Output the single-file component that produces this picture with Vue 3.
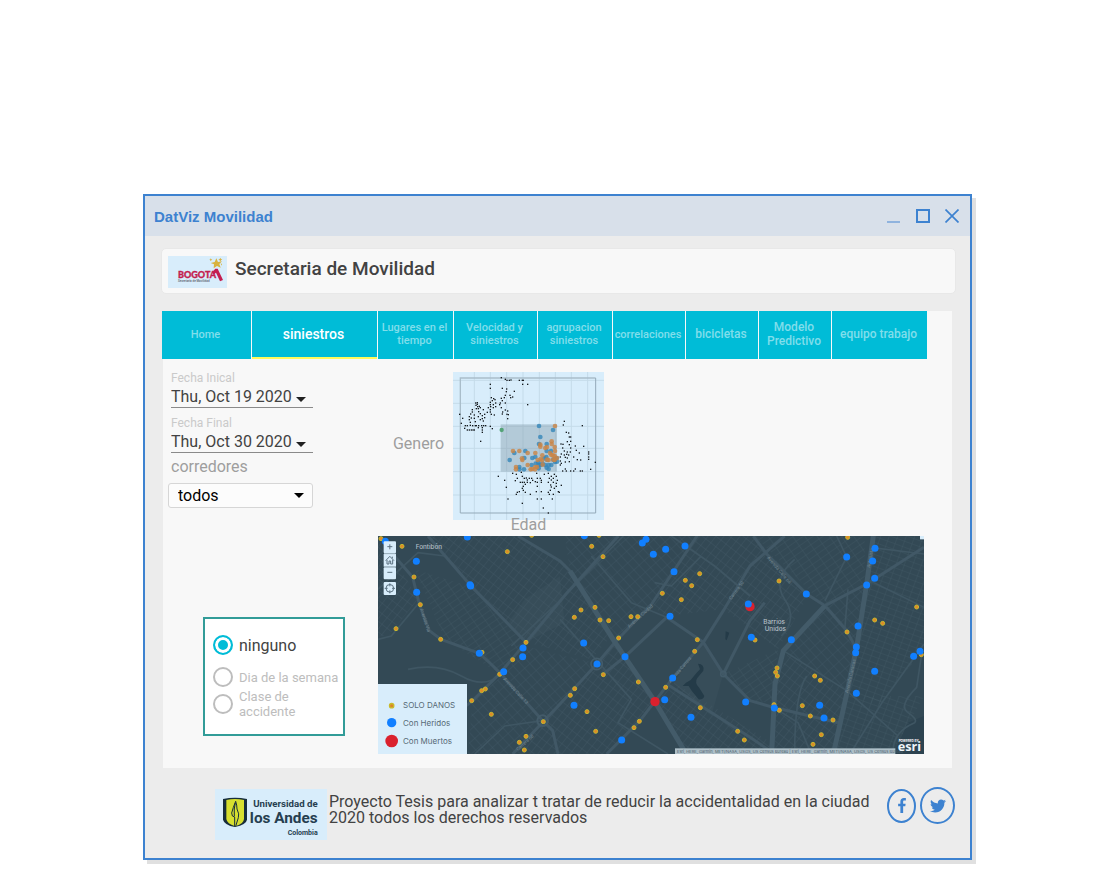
<script setup>
import { ref } from 'vue'

const tabs = [
  { label: 'Home', size: 'small' },
  { label: 'siniestros', size: 'large' },
  { label: 'Lugares en el tiempo', size: 'small' },
  { label: 'Velocidad y siniestros', size: 'small' },
  { label: 'agrupacion siniestros', size: 'small' },
  { label: 'correlaciones', size: 'small' },
  { label: 'bicicletas', size: 'medium' },
  { label: 'Modelo Predictivo', size: 'medium' },
  { label: 'equipo trabajo', size: 'medium' }
]
const activeTab = ref('siniestros')

const startDate = ref('Thu, Oct 19 2020')
const endDate = ref('Thu, Oct 30 2020')
const corridor = ref('todos')
const grouping = ref('ninguno')

const plain = [
  [184,38],[196,43],[201,46],[208,46],[213,45],[238,46],[247,46],[250,46],[248,58],[263,58],[151,58],[151,70],[187,70],[200,72],[199,80],[223,79],[196,91],[210,91],[212,98],[218,96],[154,98],[161,101],[165,104],[157,107],[184,100],[187,107],[193,98],
  [107,114],[112,113],[112,118],[108,121],[118,124],[113,125],[151,112],[151,119],[152,125],[160,119],[167,114],[181,114],[196,114],[179,119],[263,119],[97,134],[109,131],[115,131],[121,128],[130,134],[145,128],[151,134],[160,128],[167,125],[184,128],[196,135],[203,138],[188,141],
  [92,147],[97,141],[103,150],[116,140],[121,146],[127,152],[134,148],[142,142],[151,141],[154,148],[163,150],[187,147],[201,148],[205,149],[203,161],[59,148],[68,160],[64,175],[88,155],[88,164],[94,159],[103,160],[115,155],[121,164],[127,161],[134,158],[130,168],[106,170],[91,172],
  [76,182],[82,182],[91,181],[98,182],[106,182],[109,182],[116,182],[125,182],[131,182],[137,182],[151,184],[74,190],[82,195],[88,195],[94,195],[99,195],[103,195],[115,188],[127,188],[127,195],[127,202],[122,229],[157,191],
  [373,169],[370,180],[427,182],[379,202],[386,204],[388,216],[392,216],[382,230],[392,229],[363,237],[369,238],[388,239],[368,249],[392,249],[406,243],[431,244],[373,258],[382,261],[391,261],[409,256],[364,267],[373,270],[380,268],[386,270],[418,264],[446,261],[361,276],[376,277],[382,279],[401,276],[422,285],[446,267],[446,276],[446,283],[361,288],[376,291],[388,290],[412,284],[466,292],[361,300],[364,295],[376,312],[379,318],[392,318],[401,318],[421,318],[427,318],[452,313],[406,312],[368,318],
  [175,334],[194,346],[218,325],[229,328],[232,340],[226,347],[244,322],[247,334],[253,340],[259,339],[262,345],[268,340],[275,340],[278,346],[290,325],[292,340],[301,340],[304,346],[313,328],[325,325],[328,340],[334,345],[343,328],[349,334],[352,346],[340,340],[199,367],[247,352],[253,352],[256,358],[262,352],[271,353],[286,350],[292,352],[304,352],[325,352],[332,360],[340,352],[349,355],[364,361],[250,364],[292,364],[334,366],[343,370],[232,382],[238,380],[250,376],[256,382],[271,388],[289,380],[304,380],[325,382],[331,376],[340,388],[355,380],[358,382],[204,402],[247,415],[292,402],[304,402],[337,402],[310,429],[325,444],[241,352],[334,334],[349,364],[247,370],[229,388],[328,388]
]

const blue = [[297,183],[339,195],[301,216],[297,237],[320,237],[223,264],[256,258],[209,285],[253,279],[277,279],[286,276],[320,258],[333,258],[319,276],[313,280],[295,292],[287,296],[296,300],[302,300],[308,296],[316,300],[326,300],[334,300],[345,291],[351,290],[350,279],[238,306],[252,313],[275,300],[320,308],[326,312],[296,310],[238,313],[340,284],[322,285]]
const orange = [[345,183],[335,229],[335,237],[301,239],[301,245],[316,249],[321,246],[344,246],[219,258],[238,258],[263,264],[286,264],[330,264],[345,258],[307,271],[246,280],[247,285],[293,285],[302,282],[306,286],[321,284],[326,285],[339,271],[344,273],[351,279],[344,285],[263,300],[228,306],[228,313],[272,313],[286,306],[291,306],[285,313],[277,312],[308,299],[340,284],[334,270]]

// Map data: each sector lists its points from its own left edge.
const sectors = [
  {
    x: -6,
    light: [[15,14],[78,37],[467,4],[394,53],[114,129],[133,212],[60,284],[194,316],[318,355],[450,325],[410,377],[371,421],[317,470],[328,465],[287,500],[346,541],[502,563],[450,607],[430,625],[445,648]],
    injured: [[28,22],[274,9],[121,82],[282,152],[284,156],[122,175],[310,358],[441,342],[440,368],[383,413]],
    deaths: []
  },
  {
    x: 546,
    light: [[117,4],[95,37],[129,68],[376,139],[419,119],[395,155],[307,178],[364,197],[105,220],[63,228],[43,250],[120,258],[146,260],[213,248],[233,248],[176,312],[412,317],[404,352],[130,422],[235,444],[317,460],[44,464],[31,484],[81,533],[107,592],[238,562],[222,581],[421,521],[533,592],[553,618]],
    injured: [[73,5],[258,16],[247,27],[317,46],[375,36],[280,61],[342,113],[330,247],[71,327],[195,368],[111,390],[338,432],[314,497],[42,514],[185,618],[393,550],[557,504]],
    deaths: [[285,503]]
  },
  {
    x: 1086,
    light: [[323,10],[117,141],[530,219],[404,258],[428,268],[321,294],[45,318],[544,362],[111,402],[107,415],[112,426],[224,426],[241,439],[102,512],[118,529],[187,515],[211,546],[279,558],[244,602],[219,631]],
    injured: [[405,43],[320,69],[398,81],[404,133],[380,153],[199,180],[25,210],[354,276],[34,310],[154,317],[349,339],[347,356],[540,352],[521,367],[404,412],[349,478],[239,514],[252,552],[103,522]],
    deaths: [[30,218]]
  }
]

const avenues = [
  'M44 54L104 124L124 204L154 284L189 310L304 352L339 384L374 419L494 554L524 584L540 654',
  'M721 0L564 174L444 319L364 414L284 494L200 560',
  'M150 0L277 148L444 319',
  'M420 0L546 75L576 105L640 205L711 319L831 497L925 654',
  'M961 -6L821 204L711 319L656 384L546 504L404 654',
  'M1220 0L1116 90L1036 224L976 319L886 424L786 554L686 654',
  'M866 244L976 319L1036 414L1116 494L1186 514L1380 560',
  'M866 244L741 362L676 414',
  'M866 444L1116 604L1190 654',
  'M1036 414L1116 254L1160 200',
  'M1126 0L1166 54L1286 174L1341 209L1406 284L1436 340',
  'M1638 34L1466 144L1341 209L1216 344L1191 444L1181 654'
]
const majorAvenues = [
  'M1486 0L1466 144L1436 334L1406 474L1366 654',
  'M1341 209L1216 344L1191 444L1181 654',
  'M576 105L711 319L831 497L925 654'
]
const minorRoads = [
  'M736 0L546 194L400 330',
  'M1376 0L1406 63L1341 194',
  'M1216 344L1406 464L1560 600',
  'M1638 324L1516 494L1416 654',
  'M1476 34L1638 54',
  'M1476 134L1638 214',
  'M1400 284L1410 160',
  'M546 250L760 490L720 560L870 654',
  'M640 60L760 200L866 244',
  'M120 204L40 300L0 310',
  'M90 400Q180 380 250 420T370 414',
  'M880 0L1010 90L1116 180',
  'M970 60L880 150L830 140',
  'M290 654L380 570L494 554',
  'M1250 70Q1180 130 1220 190T1210 300',
  'M1300 654L1260 560L1180 510',
  'M1286 420Q1250 470 1250 654',
  'M0 160L120 50L200 60',
  'M1631 354L1616 454Q1560 510 1590 530T1610 560Q1540 590 1546 654'
]

const districts = [
  { pattern: 'steep', points: '110,100 270,150 440,320 360,410 200,310' },
  { pattern: 'dense', points: '150,0 410,0 560,80 700,300 640,370 444,319 277,148' },
  { pattern: 'dense', points: '0,0 40,50 120,190 30,300 0,300' },
  { pattern: 'wide', points: '560,0 960,0 820,210 711,319 576,105' },
  { pattern: 'dense', points: '960,0 1130,0 1290,180 1200,340 1036,220 860,240 820,205' },
  { pattern: 'steep', points: '1130,0 1460,0 1460,140 1341,209' },
  { pattern: 'upright', points: '1490,0 1638,0 1638,340 1500,510 1410,470' },
  { pattern: 'wide', points: '1341,209 1466,144 1406,474 1230,350' },
  { pattern: 'dense', points: '1230,350 1406,474 1366,654 1185,654 1195,440' },
  { pattern: 'upright', points: '1410,480 1638,480 1540,654 1370,654' },
  { pattern: 'dense', points: '546,510 711,319 831,497 690,654 404,654' },
  { pattern: 'wide', points: '284,494 374,419 494,554 400,654 270,654' },
  { pattern: 'dense', points: '831,497 890,440 1180,620 1180,654 925,654' },
  { pattern: 'steep', points: '1036,414 1200,340 1190,500 1110,494' },
  { pattern: 'wide', points: '440,330 560,360 650,380 546,500 500,550 380,415' }
]
</script>

<template>
  <section class="window">
    <header class="titlebar">
      <h1>DatViz Movilidad</h1>
      <div class="window-buttons">
        <button type="button" aria-label="Minimizar">
          <svg width="14" height="14" viewBox="0 0 14 14"><path d="M0 13H13" stroke="#8fb3de" stroke-width="2" /></svg>
        </button>
        <button type="button" aria-label="Maximizar">
          <svg width="14" height="14" viewBox="0 0 14 14"><rect x="1" y="1" width="12" height="12" fill="none" stroke="#3d82d0" stroke-width="2" /></svg>
        </button>
        <button type="button" aria-label="Cerrar">
          <svg width="14" height="14" viewBox="0 0 14 14"><path d="M.5 .5L13.5 13.5M13.5 .5L.5 13.5" stroke="#3d82d0" stroke-width="1.7" /></svg>
        </button>
      </div>
    </header>

    <div class="brand">
      <svg class="brand-logo" viewBox="0 0 177 96" role="img" aria-label="Bogotá Secretaría de Movilidad">
        <rect width="177" height="96" fill="#d8edfb" />
        <text x="30" y="65" font-family="Lato, sans-serif" font-weight="900" font-size="27" fill="#c41e50" stroke="#c41e50" stroke-width="1">BOGOTA</text>
        <path d="M133 48L142 38L149 38L165 72L156 76L144 50L136 56Z" fill="#c41e50" />
        <path d="M145 7L150 18L162 16L154 24L158 35L147 30L137 37L138 25L128 21L140 18Z" fill="#d8b23e" />
        <path d="M157 5l2 4 4 1-4 3-2 4-2-4-4-2 4-2z M128 7l2 3 3 1-3 2-2 3-1-3-3-2 3-1z M158 22l4 2-2 5z" fill="#d8b23e" />
        <text x="30" y="77" font-family="Roboto, sans-serif" font-weight="500" font-size="9" fill="#59606b">Secretaría de Movilidad</text>
      </svg>
      <h2>Secretaria de Movilidad</h2>
    </div>

    <main class="panel">
      <nav class="tabs">
        <button
          v-for="tab in tabs"
          :key="tab.label"
          type="button"
          :class="['tab', tab.size, { active: tab.label === activeTab }]"
          @click="activeTab = tab.label"
        >{{ tab.label }}</button>
      </nav>

      <div class="content">
        <aside class="filters">
          <div class="field">
            <label for="start">Fecha Inical</label>
            <div class="field-line">
              <input id="start" v-model="startDate" type="text" />
              <svg width="10" height="5" viewBox="0 0 10 5"><path d="M0 0H10L5 5Z" fill="#212121" /></svg>
            </div>
          </div>
          <div class="field">
            <label for="end">Fecha Final</label>
            <div class="field-line">
              <input id="end" v-model="endDate" type="text" />
              <svg width="10" height="5" viewBox="0 0 10 5"><path d="M0 0H10L5 5Z" fill="#212121" /></svg>
            </div>
          </div>
          <label class="corridor-label" for="corridor">corredores</label>
          <div class="corridor">
            <select id="corridor" v-model="corridor">
              <option>todos</option>
            </select>
            <svg width="10" height="5" viewBox="0 0 10 5"><path d="M0 0H10L5 5Z" fill="#000" /></svg>
          </div>

          <div class="options" role="radiogroup" aria-label="Agrupar por">
            <label class="option main"><input v-model="grouping" type="radio" name="grouping" value="ninguno" /><span>ninguno</span></label>
            <label class="option"><input v-model="grouping" type="radio" name="grouping" value="dia" /><span>Dia de la semana</span></label>
            <label class="option"><input v-model="grouping" type="radio" name="grouping" value="clase" /><span>Clase de accidente</span></label>
          </div>
        </aside>

        <div class="charts">
          <figure class="scatter">
            <span class="axis-y">Genero</span>
            <svg class="scatter-plot" viewBox="39 21 453 444" role="img" aria-label="Genero por edad">
              <rect x="39" y="21" width="453" height="444" fill="#d8edfb" />
              <path d="M103 21V465M151 21V465M200 21V465M249 21V465M298 21V465M346 21V465M394 21V465M443 21V465M39 46H492M39 115H492M39 184H492M39 250H492M39 320H492M39 390H492" stroke="#c4dbe9" stroke-width="3" fill="none" />
              <path d="M61 444V39H467" fill="none" stroke="#a9bdca" stroke-width="4" />
              <path d="M61 444H467V39" fill="none" stroke="#93a9b8" stroke-width="3" />
              <rect x="182" y="178" width="169" height="142" fill="#7e97a6" fill-opacity=".4" />
              <rect v-for="(p, i) in plain" :key="'p' + i" :x="p[0] - 2" :y="p[1] - 2" width="4" height="4" fill="#14191d" />
              <circle v-for="(p, i) in blue" :key="'b' + i" :cx="p[0]" :cy="p[1]" r="7" fill="#3486b9" fill-opacity=".8" />
              <circle v-for="(p, i) in orange" :key="'o' + i" :cx="p[0]" :cy="p[1]" r="7" fill="#c98546" fill-opacity=".8" />
              <circle cx="185" cy="195" r="6.5" fill="#54a377" />
            </svg>
            <figcaption class="axis-x">Edad</figcaption>
          </figure>

          <svg class="map" viewBox="0 0 1638 654" role="img" aria-label="Mapa de siniestros">
            <defs>
              <pattern id="dense" width="19" height="25" patternUnits="userSpaceOnUse" patternTransform="rotate(38)"><path d="M0 0H19M0 0V25" class="street" /></pattern>
              <pattern id="wide" width="28" height="21" patternUnits="userSpaceOnUse" patternTransform="rotate(48)"><path d="M0 0H28M0 0V21" class="street" /></pattern>
              <pattern id="steep" width="17" height="30" patternUnits="userSpaceOnUse" patternTransform="rotate(55)"><path d="M0 0H17M0 0V30" class="street" /></pattern>
              <pattern id="upright" width="24" height="17" patternUnits="userSpaceOnUse" patternTransform="rotate(20)"><path d="M0 0H24M0 0V17" class="street" /></pattern>
            </defs>
            <rect width="1638" height="654" fill="#334955" />
            <polygon points="440,190 546,120 560,260 444,319 390,260" fill="#374d59" />
            <polygon points="976,319 1036,414 1000,540 886,440" fill="#374d59" />
            <polygon points="1638,540 1590,560 1546,654 1638,654" fill="#2d4350" />
            <polygon v-for="(d, i) in districts" :key="'d' + i" :points="d.points" :fill="`url(#${d.pattern})`" />
            <g fill="none" stroke-linejoin="round">
              <path v-for="(d, i) in minorRoads" :key="'m' + i" :d="d" stroke="#3f5663" stroke-width="5" />
              <path v-for="(d, i) in avenues" :key="'a' + i" :d="d" stroke="#415866" stroke-width="9" />
              <path v-for="(d, i) in majorAvenues" :key="'j' + i" :d="d" stroke="#435b69" stroke-width="15" />
              <circle cx="494" cy="554" r="16" stroke="#435b69" stroke-width="6" />
              <circle cx="656" cy="384" r="17" stroke="#435b69" stroke-width="5" />
              <circle cx="1036" cy="414" r="8" stroke="#435b69" stroke-width="5" />
            </g>
            <path d="M960 383Q980 384 976 404L958 426Q948 440 964 456L979 480Q976 492 962 490L942 466L932 450L914 450L924 440L938 432L956 410L966 400Z M1043 286L1054 290L1046 313L1042 310Z" fill="#243b48" />
            <g class="road-name">
              <text transform="translate(126 220) rotate(72)">Avenida Vía</text>
              <text transform="translate(375 430) rotate(47)">Avenida Calle 13</text>
              <text transform="translate(420 645) rotate(-42)">Carrera 68</text>
              <text transform="translate(754 276) rotate(-42)">Avenida Ciudad</text>
              <text transform="translate(878 442) rotate(-50)">Avenida Carrera</text>
              <text transform="translate(1060 192) rotate(-54)">Carrera 50</text>
              <text transform="translate(1166 66) rotate(49)">Avenida Calle 68</text>
              <text transform="translate(1410 472) rotate(-77)">Avenida Caracas</text>
              <text transform="translate(1476 96) rotate(-80)">Autopista</text>
            </g>
            <g class="place">
              <text x="113" y="38">Fontibón</text>
              <text x="1156" y="264">Barrios</text>
              <text x="1160" y="286">Unidos</text>
            </g>
            <g v-for="s in sectors" :key="s.x" :transform="`translate(${s.x} -6)`">
              <circle v-for="(p, i) in s.light" :key="'l' + i" :cx="p[0]" :cy="p[1]" r="6" fill="#e08a28" stroke="#c6b82e" stroke-width="3" />
              <circle v-for="(p, i) in s.deaths" :key="'d' + i" :cx="p[0]" :cy="p[1]" r="14" fill="#da212e" />
              <circle v-for="(p, i) in s.injured" :key="'i' + i" :cx="p[0]" :cy="p[1]" r="10.5" fill="#117fff" />
            </g>
            <g fill="#d8edfb">
              <rect x="17" y="16" width="37" height="36" rx="3" />
              <rect x="17" y="54" width="37" height="38" />
              <rect x="17" y="94" width="37" height="36" rx="3" />
              <rect x="17" y="138" width="37" height="39" rx="3" />
              <rect x="1626" y="0" width="12" height="10" />
            </g>
            <path d="M18 53H53M18 93H53" stroke="#a9bfcc" stroke-width="3" />
            <g fill="none" stroke="#5b7180" stroke-width="3">
              <path d="M28 32H43M35.500 25V40M28 109H43M23 74L35.500 61L48 74M27 72V84H33V75H38V84H44V72M43 67V62" />
              <circle cx="35.500" cy="157" r="11.500" />
              <path d="M35.500 142V151M35.500 163V172M20 157H29M42 157H51" />
            </g>
            <rect y="444" width="267" height="210" fill="#d8edfb" />
            <circle cx="41" cy="509" r="6.500" fill="#dc8628" stroke="#c9ba2b" stroke-width="4" />
            <circle cx="41" cy="560" r="14" fill="#117fff" />
            <circle cx="41" cy="615" r="19" fill="#da212e" />
            <g class="legend">
              <text x="75" y="517">SOLO DANOS</text>
              <text x="75" y="569">Con Heridos</text>
              <text x="75" y="624">Con Muertos</text>
            </g>
            <rect x="891" y="637" width="661" height="17" fill="#aebfc8" />
            <text class="credits" x="897" y="650">Esri, HERE, Garmin, METI/NASA, USGS, US Census Bureau | Esri, HERE, Garmin, METI/NASA, USGS, US Census Bureau</text>
            <text class="powered" x="1562" y="619">POWERED BY</text>
            <text class="esri" x="1559" y="646">esri</text>
          </svg>
        </div>
      </div>
    </main>

    <footer class="footer">
      <svg class="andes" viewBox="0 0 336 153" role="img" aria-label="Universidad de los Andes Colombia">
        <rect width="336" height="153" fill="#d8edfb" />
        <path d="M24 30Q60 22 96 30V92Q94 106 60 114Q28 108 24 92Z" fill="#172d3b" />
        <path d="M34 33Q60 27 87 33V90Q86 106 60 112Q36 104 34 90Z" fill="#d7df2f" />
        <path d="M59 112V84Q50 84 50 72Q54 56 62 37Q66 48 66 60Q74 76 70 86L62 112" fill="none" stroke="#172d3b" stroke-width="3" />
        <path d="M61 42Q56 58 58 82" fill="none" stroke="#172d3b" stroke-width="3" />
        <g font-family="Roboto, sans-serif" fill="#263e50" font-weight="700" text-anchor="end">
          <text x="308" y="53" font-size="29">Universidad de</text>
          <text x="308" y="101" font-size="46">los Andes</text>
          <text x="308" y="137" font-size="21">Colombia</text>
        </g>
      </svg>
      <p>Proyecto Tesis para analizar t tratar de reducir la accidentalidad en la ciudad 2020 todos los derechos reservados</p>
      <div class="social">
        <a class="facebook" href="#" aria-label="Facebook">
          <svg width="8" height="15" viewBox="0 0 264 512"><path fill="#3d82d0" d="M76.700 512V283H0v-91h76.700v-71.700C76.700 42.400 124.300 0 193.800 0c33.300 0 61.900 2.500 70.200 3.600V85h-48.200c-37.800 0-45.100 18-45.100 44.300V192H256l-11.700 91h-73.600v229" /></svg>
        </a>
        <a class="twitter" href="#" aria-label="Twitter">
          <svg width="16" height="16" viewBox="0 0 512 512"><path fill="#3d82d0" d="M459.370 151.716c.325 4.548.325 9.097.325 13.645 0 138.720-105.583 298.558-298.558 298.558-59.452 0-114.680-17.219-161.137-47.106 8.447.974 16.568 1.299 25.340 1.299 49.055 0 94.213-16.568 130.274-44.832-46.132-.975-84.792-31.188-98.112-72.772 6.498.974 12.995 1.624 19.818 1.624 9.421 0 18.843-1.300 27.614-3.573-48.081-9.747-84.143-51.980-84.143-102.985v-1.299c13.969 7.797 30.214 12.670 47.431 13.319-28.264-18.843-46.781-51.005-46.781-87.391 0-19.492 5.197-37.360 14.294-52.954 51.655 63.675 129.300 105.258 216.365 109.807-1.624-7.797-2.599-15.918-2.599-24.040 0-57.828 46.782-104.934 104.934-104.934 30.213 0 57.502 12.670 76.670 33.137 23.715-4.548 46.456-13.320 66.599-25.340-7.798 24.366-24.366 44.833-46.132 57.827 21.117-2.273 41.584-8.122 60.426-16.243-14.292 20.791-32.161 39.308-52.628 54.253z" /></svg>
        </a>
      </div>
    </footer>
  </section>
</template>

<style>
body {
  background: #fff;
}
</style>

<style scoped>
* {
  box-sizing: border-box;
}
svg {
  display: block;
  flex: none;
}
button,
input,
select {
  margin: 0;
  padding: 0;
  border: 0;
  background: none;
  font-family: Roboto, sans-serif;
}
.window {
  margin: 194px 123px 27px 143px;
  border: 2px solid #3d82d0;
  background: #ececec;
  box-shadow: 4px 4px 0 #e0e0e0;
  font-family: Roboto, sans-serif;
  color: #424242;
}
.titlebar {
  display: flex;
  align-items: center;
  justify-content: space-between;
  height: 40px;
  padding: 0 11px 0 9px;
  background: #d8e0ea;
}
.titlebar h1 {
  margin: 0;
  font: bold 15px "Liberation Sans", sans-serif;
  color: #3d82d0;
}
.window-buttons {
  display: flex;
  gap: 15px;
}
.brand {
  display: flex;
  gap: 8px;
  height: 46px;
  margin: 12px 14px 17px 16px;
  padding: 7px 6px;
  border: 1px solid #e8e8e8;
  border-radius: 5px;
  background: #f8f8f8;
}
.brand-logo {
  width: 59px;
  height: 32px;
}
.brand h2 {
  margin: 0;
  font-size: 19px;
  line-height: 25px;
  font-weight: 500;
}
.panel {
  margin: 0 18px;
  padding-bottom: 14px;
  background: #f8f8f8;
}
.tabs {
  display: grid;
  grid-template-columns: 89fr 125fr 75fr 83fr 74fr 72fr 72fr 72fr 95fr;
  gap: 1px;
  margin: 0 25px 0 -1px;
}
.tab {
  height: 48px;
  min-width: 0;
  padding: 0 2px 2px 0;
  background: #00bcd7;
  color: #80deeb;
  font-weight: 500;
}
.tab.small {
  font-size: 11px;
  line-height: 13px;
}
.tab.medium {
  font-size: 12px;
  line-height: 14px;
}
.tab.large {
  font-size: 14px;
  line-height: 16px;
}
.tab.active {
  color: #fff;
  box-shadow: inset 0 -2px #fffa5c;
}
.content {
  display: grid;
  grid-template-columns: 215px 1fr;
  padding: 13px 28px 0 0;
}
.filters {
  padding-left: 5px;
}
.field {
  width: 142px;
  height: 45px;
  margin-left: 3px;
}
.field label {
  display: block;
  font-size: 12px;
  line-height: 12px;
  color: #cacaca;
}
.field-line {
  display: flex;
  align-items: flex-end;
  gap: 4px;
  height: 24px;
  border-bottom: 1px solid #8a8a8a;
}
.field-line svg {
  margin-bottom: 5px;
}
.field input {
  width: 121px;
  height: 22px;
  font-size: 16px;
  color: #424242;
}
.corridor-label {
  display: block;
  margin-left: 3px;
  font-size: 16px;
  line-height: 10px;
  color: #9e9e9e;
}
.corridor {
  display: grid;
  align-items: center;
  width: 145px;
  height: 25px;
  margin-top: 11px;
  border: 1px solid #d6d6d6;
  border-radius: 3px;
  background: #fcfcfc;
}
.corridor select,
.corridor svg {
  grid-area: 1 / 1;
}
.corridor svg {
  justify-self: end;
  margin-right: 8px;
  pointer-events: none;
}
.corridor select {
  height: 23px;
  padding-left: 9px;
  appearance: none;
  font-size: 16px;
  color: #000;
}
.options {
  display: flex;
  flex-direction: column;
  width: 142px;
  margin: 109px 0 0 35px;
  padding: 16px 0 15px 8px;
  border: 2px solid #329c98;
  background: #fff;
}
.option {
  display: flex;
  align-items: center;
  gap: 6px;
  height: 24px;
  font-size: 13px;
  line-height: 15px;
  color: #bdbdbd;
}
.option.main {
  height: 20px;
  margin-bottom: 10px;
  font-size: 16px;
  color: #424242;
}
.option:last-child {
  height: 30px;
}
.option:last-child span {
  width: 70px;
}
.option input {
  flex: none;
  width: 20px;
  height: 20px;
  border: 2px solid #bdbdbd;
  border-radius: 50%;
  appearance: none;
}
.option input:checked {
  border-color: #00bcd7;
  background: #00bcd7;
  box-shadow: inset 0 0 0 3px #fff;
}
.charts {
  min-width: 0;
}
.scatter {
  display: grid;
  grid-template-columns: 75px 151px;
  margin: 0 0 7px;
  font-size: 16px;
  color: #9e9e9e;
}
.axis-y {
  justify-self: end;
  align-self: center;
  margin-right: 9px;
  padding-bottom: 6px;
}
.scatter-plot {
  width: 151px;
  height: 148px;
}
.axis-x {
  grid-column: 2;
  height: 9px;
  line-height: 9px;
  text-align: center;
}
.map {
  width: 100%;
  height: auto;
}
.street {
  fill: none;
  stroke: #435a67;
  stroke-width: 2;
}
.road-name {
  font: 14px Roboto, sans-serif;
  fill: #71858f;
}
.place {
  font: 500 19px Inter, sans-serif;
  fill: #b3bfc6;
}
.legend {
  font: 24px Inter, sans-serif;
  fill: #566975;
}
.credits {
  font: 12px Inter, sans-serif;
  fill: #4c616d;
}
.powered {
  font: bold 9px Inter, sans-serif;
  fill: #fff;
}
.esri {
  font: bold 38px/1 "Noto Sans", sans-serif;
  fill: #eef4f8;
}
.footer {
  display: flex;
  align-items: flex-start;
  padding: 19px 15px 18px 70px;
}
.andes {
  width: 112px;
  height: 51px;
  margin-top: 2px;
}
.footer p {
  flex: 1;
  margin: 7px 0 0 2px;
  font-size: 16px;
  line-height: 16px;
}
.social {
  display: flex;
  align-items: center;
  gap: 4px;
}
.social a {
  display: flex;
  align-items: center;
  justify-content: center;
  border: 2px solid #3d82d0;
  border-radius: 50%;
}
.facebook {
  width: 29px;
  height: 34px;
}
.twitter {
  width: 35px;
  height: 37px;
}
</style>
